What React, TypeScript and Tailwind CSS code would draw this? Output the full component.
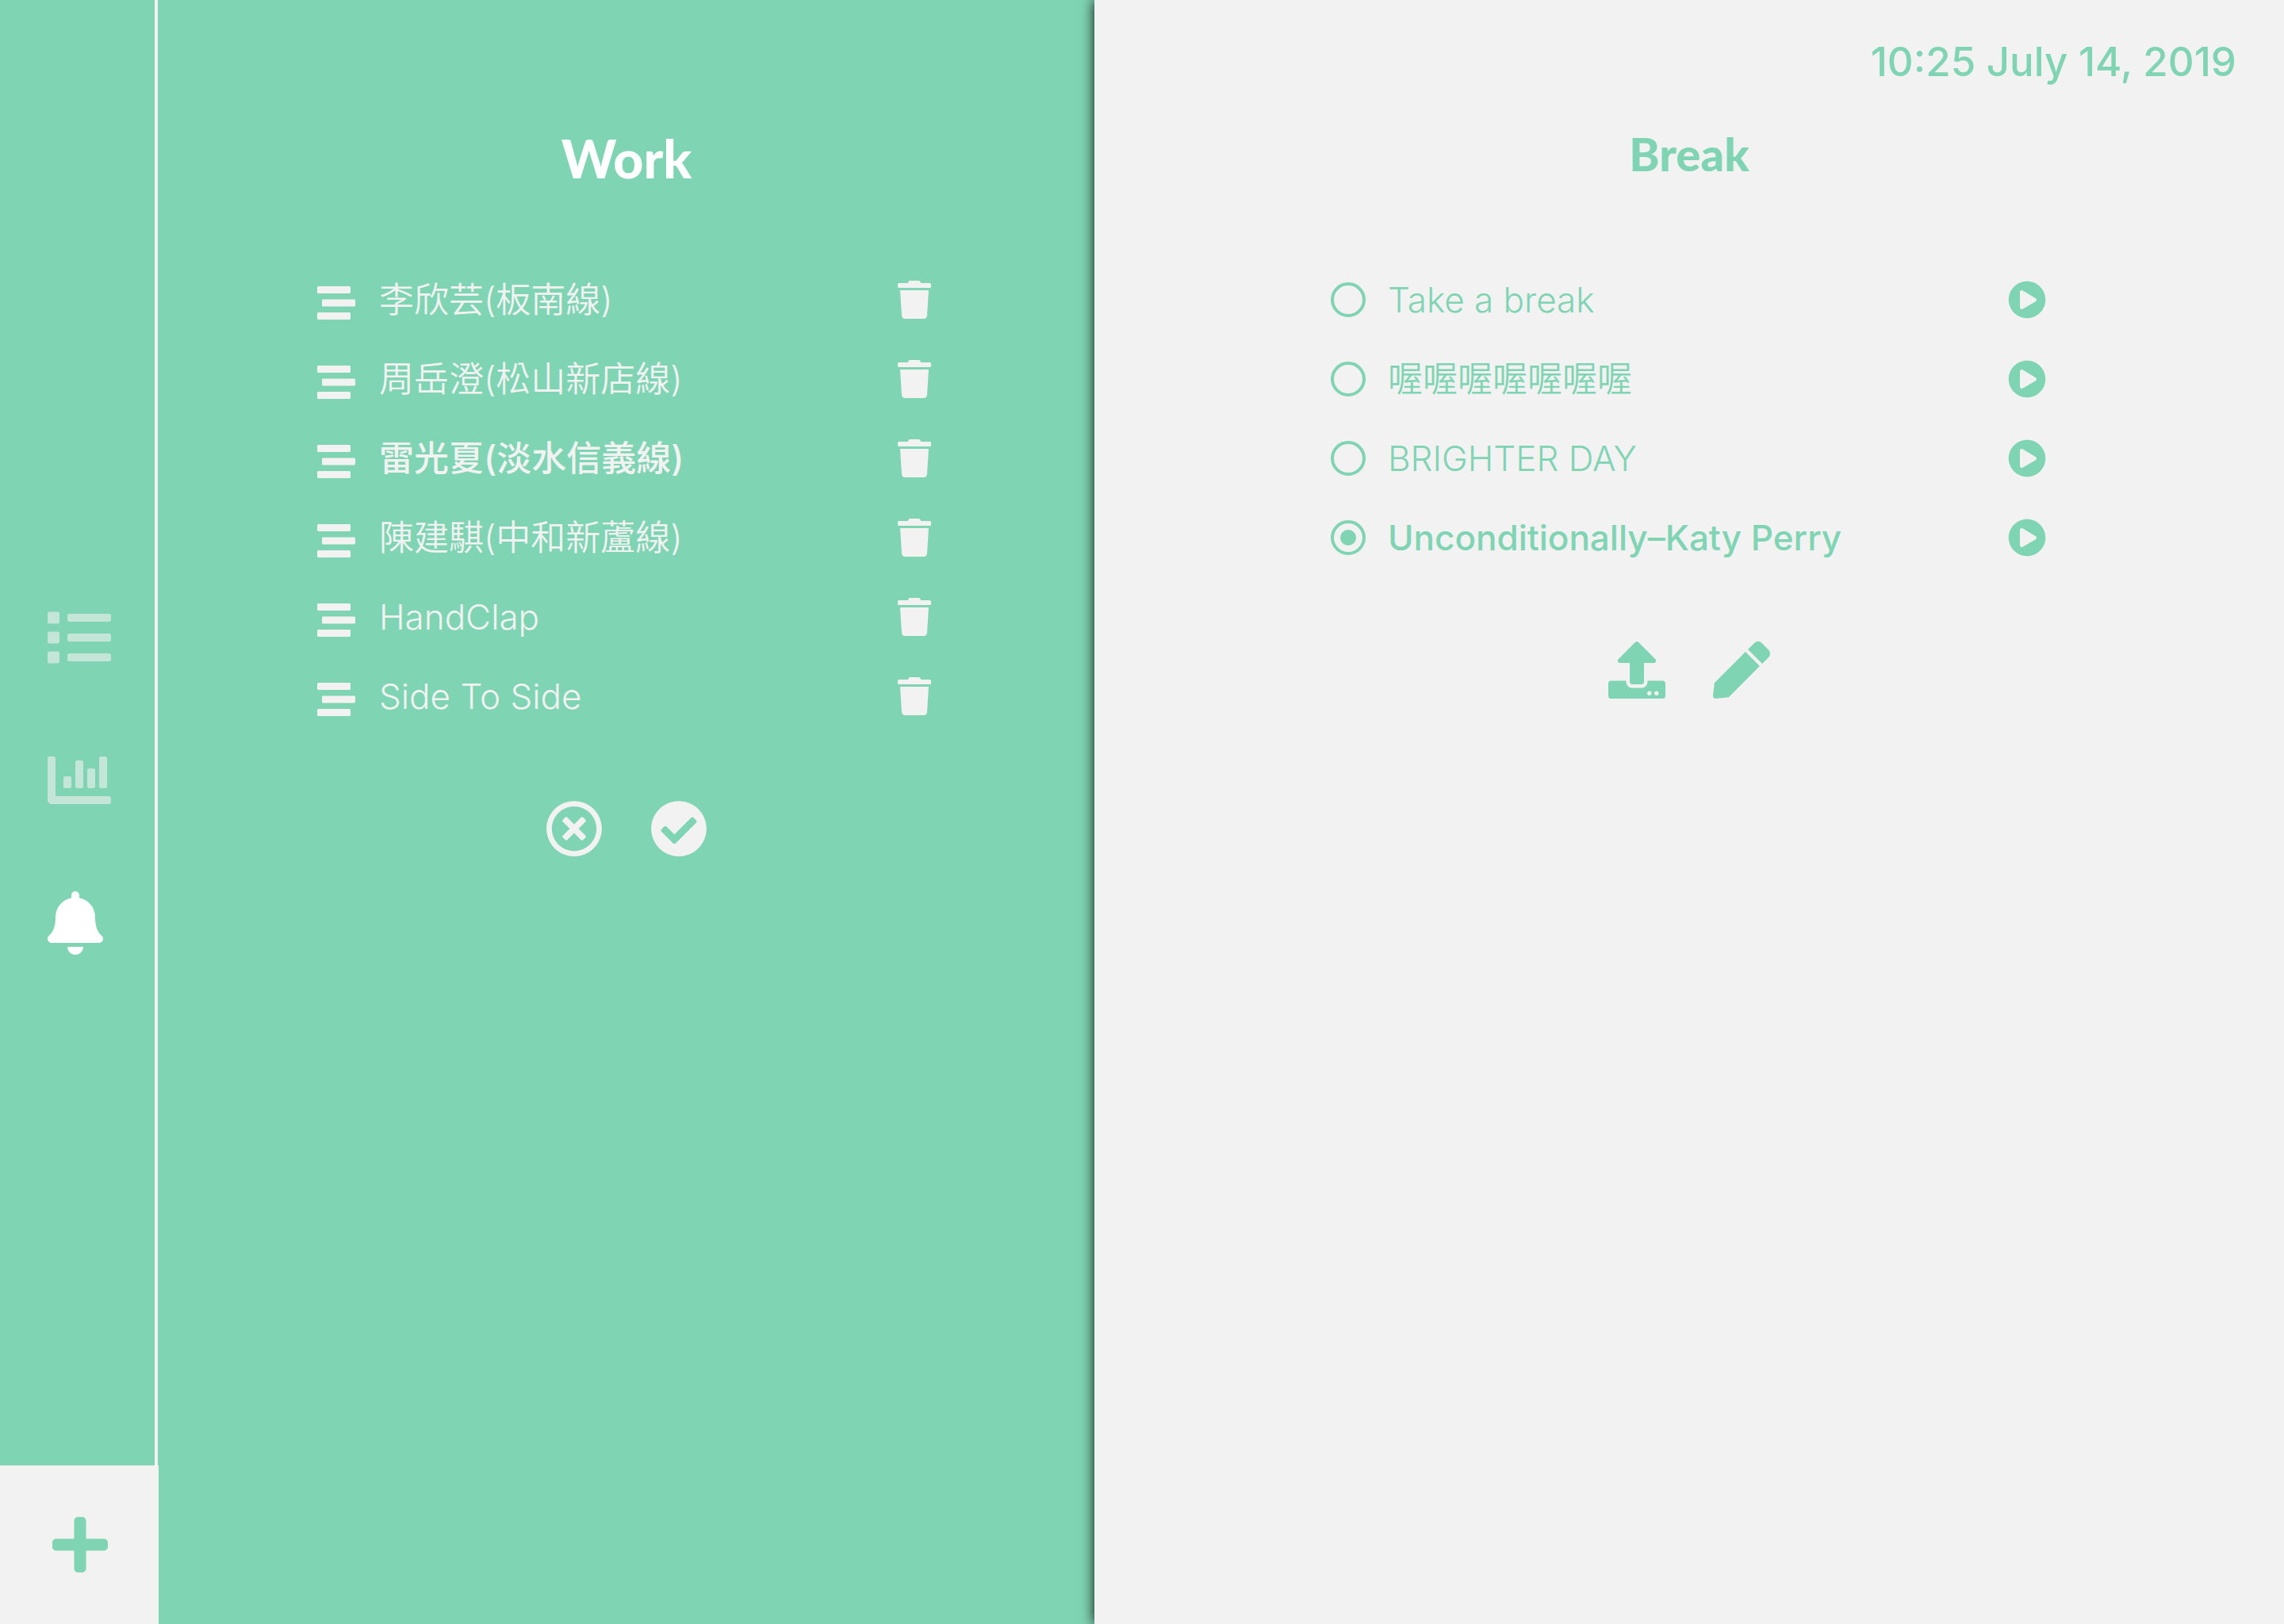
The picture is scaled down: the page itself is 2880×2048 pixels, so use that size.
import { useState } from "react";
import {
  FaBell,
  FaChartBar,
  FaCheckCircle,
  FaList,
  FaPen,
  FaPlayCircle,
  FaPlus,
  FaRegTimesCircle,
  FaStream,
  FaTrash,
  FaUpload,
} from "react-icons/fa";

type Song = { id: string; title: string };

const workSongs: Song[] = [
  { id: "w1", title: "李欣芸(板南線)" },
  { id: "w2", title: "周岳澄(松山新店線)" },
  { id: "w3", title: "雷光夏(淡水信義線)" },
  { id: "w4", title: "陳建騏(中和新蘆線)" },
  { id: "w5", title: "HandClap" },
  { id: "w6", title: "Side To Side" },
];

const breakSongs: Song[] = [
  { id: "b1", title: "Take a break" },
  { id: "b2", title: "喔喔喔喔喔喔喔" },
  { id: "b3", title: "BRIGHTER DAY" },
  { id: "b4", title: "Unconditionally–Katy Perry" },
];

function Sidebar() {
  return (
    <aside className="flex w-[200px] shrink-0 flex-col">
      <nav className="mr-px flex flex-1 flex-col items-start justify-center gap-[100px] border-r-4 border-[#f2f2f2] pt-[120px] pl-[60px]">
        <button type="button" aria-label="Tasks" className="text-[#c3e6d8]">
          <FaList className="size-20" />
        </button>
        <button type="button" aria-label="Statistics" className="text-[#c3e6d8]">
          <FaChartBar className="size-20" />
        </button>
        <button type="button" aria-label="Ringtones" className="text-white">
          <FaBell className="h-20 w-[70px]" />
        </button>
      </nav>
      <button
        type="button"
        aria-label="Add"
        className="flex h-[200px] items-center justify-center bg-[#f2f2f2] pl-0.5 text-[#7fd4b3]"
      >
        <FaPlus className="h-20 w-[70px]" />
      </button>
    </aside>
  );
}

function WorkPanel() {
  return (
    <section className="flex flex-[59] flex-col items-center pt-40 text-[#f2f2f2]">
      <h2 className="font-[Lato,sans-serif] text-[66px] leading-[80px] font-black text-white">Work</h2>
      <ul className="mt-[88px] w-[780px] max-w-full pr-1.5">
        {workSongs.map((song) => (
          <li key={song.id} className="flex h-[100px] items-center gap-[30px]">
            <button type="button" aria-label={`Move ${song.title}`} className="pt-[7px]">
              <FaStream className="size-12" />
            </button>
            <span
              className={
                song.id === "w3"
                  ? "flex-1 text-[44px] leading-[60px] font-medium"
                  : "flex-1 text-[44px] leading-[60px] font-[350]"
              }
            >
              {song.title}
            </span>
            <button type="button" aria-label={`Delete ${song.title}`}>
              <FaTrash className="h-12 w-[42px]" />
            </button>
          </li>
        ))}
      </ul>
      <div className="mt-[81px] flex gap-[60px]">
        <button type="button" aria-label="Cancel">
          <FaRegTimesCircle className="size-[72px]" />
        </button>
        <button type="button" aria-label="Confirm">
          <FaCheckCircle className="size-[72px]" />
        </button>
      </div>
    </section>
  );
}

function BreakPanel() {
  const [selected, setSelected] = useState("b4");
  return (
    <section className="flex flex-[75] flex-col items-center bg-[#f2f2f2] pt-[46px] text-[#7fd4b3] shadow-[0_0_16px_rgba(0,0,0,0.95)]">
      <time dateTime="2019-07-14T10:25" className="self-end pr-[60px] text-[51px] leading-[64px] font-medium">
        10:25 July 14, 2019
      </time>
      <h2 className="mt-[44px] font-[Lato,sans-serif] text-[58px] leading-[80px] font-black">Break</h2>
      <ul className="mt-[94px] w-[904px] max-w-full pr-0.5">
        {breakSongs.map((song) => (
          <li key={song.id} className="flex h-[100px] items-center">
            <label className="flex flex-1 items-center gap-7">
              <input
                type="radio"
                name="break-song"
                value={song.id}
                checked={selected === song.id}
                onChange={() => setSelected(song.id)}
                className="flex size-11 shrink-0 appearance-none items-center justify-center rounded-full border-4 border-[#7fd4b3] before:size-5 before:rounded-full checked:before:bg-[#7fd4b3]"
              />
              <span
                className={
                  selected === song.id
                    ? "text-[44px] leading-[60px] font-medium"
                    : "text-[44px] leading-[60px] font-[350]"
                }
              >
                {song.title}
              </span>
            </label>
            <button type="button" aria-label={`Play ${song.title}`}>
              <FaPlayCircle className="size-12" />
            </button>
          </li>
        ))}
      </ul>
      <div className="mt-[81px] flex gap-[60px]">
        <button type="button" aria-label="Upload">
          <FaUpload className="size-[72px]" />
        </button>
        <button type="button" aria-label="Edit">
          <FaPen className="size-[72px]" />
        </button>
      </div>
    </section>
  );
}

export default function App() {
  return (
    <main className="flex min-h-screen bg-[#7fd4b3] font-[Inter,'Noto_Sans_CJK_TC',sans-serif]">
      <Sidebar />
      <WorkPanel />
      <BreakPanel />
    </main>
  );
}
